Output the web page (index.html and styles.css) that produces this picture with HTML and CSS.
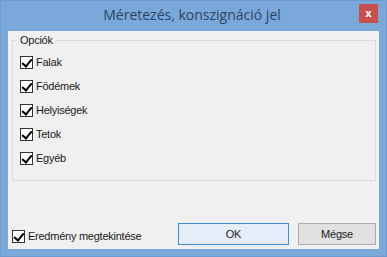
FILE: index.html
```html
<!DOCTYPE html>
<html lang="hu">
<head>
    <meta charset="UTF-8">
    <title>Méretezés, konszignáció jel</title>
    <link rel="stylesheet" href="styles.css">
</head>
<body>
    <div class="window">
        <div class="titlebar">
            <span class="title">Méretezés, konszignáció jel</span>
            <button class="close">x</button>
        </div>

        <div class="client">
            <fieldset class="group">
                <legend>Opciók</legend>
                <div class="options">
                    <label class="check"><span class="box checked"></span>Falak</label>
                    <label class="check"><span class="box checked"></span>Födémek</label>
                    <label class="check"><span class="box checked"></span>Helyiségek</label>
                    <label class="check"><span class="box checked"></span>Tetok</label>
                    <label class="check"><span class="box checked"></span>Egyéb</label>
                </div>
            </fieldset>

            <div class="footer">
                <label class="check"><span class="box checked"></span>Eredmény megtekintése</label>
                <div class="buttons">
                    <button class="btn btn-default">OK</button>
                    <button class="btn btn-cancel">Mégse</button>
                </div>
            </div>
        </div>
    </div>
</body>
</html>
```

FILE: styles.css
```css
* {
    margin: 0;
    padding: 0;
    box-sizing: border-box;
}

body {
    background: #7aa7da;
    font-family: "Liberation Sans", Arial, sans-serif;
    font-size: 11px;
    letter-spacing: -0.25px;
    color: #1a1a1a;
}

.window {
    width: 387px;
    height: 257px;
    display: flex;
    flex-direction: column;
    background: #7ba8db;
    border: 1px solid #6f9bcf;
}

.titlebar {
    height: 30px;
    display: flex;
    align-items: center;
    padding: 0 8px 0 8px;
}

.title {
    flex: 1;
    text-align: center;
    font-family: "Open Sans", sans-serif;
    font-size: 14px;
    letter-spacing: 0;
    color: #2a4460;
    padding-left: 16px;
    padding-bottom: 3px;
}

.close {
    width: 19px;
    height: 19px;
    margin-bottom: 5px;
    border: none;
    background: #c7504d;
    color: #fff;
    font-family: "DejaVu Sans", sans-serif;
    font-weight: bold;
    font-size: 10px;
    line-height: 17px;
}

.client {
    flex: 1;
    margin: 0 7px 7px 7px;
    padding: 0 3px 4px 4px;
    background: #f0f0f0;
    display: flex;
    flex-direction: column;
}

.group {
    margin-top: 3px;
    border: 1px solid #dcdcdc;
    padding: 9px 7px 15px 7px;
}

.group legend {
    margin-left: -3px;
    padding: 0 3px;
    line-height: 13px;
}

.options {
    display: flex;
    flex-direction: column;
    gap: 11px;
}

.check {
    display: flex;
    align-items: center;
    gap: 3px;
    line-height: 13px;
}

.box {
    width: 13px;
    height: 13px;
    border: 1px solid #333;
    background: #fff;
    display: flex;
    align-items: center;
    justify-content: center;
}

.box.checked::after {
    content: "";
    width: 8px;
    height: 4px;
    border-left: 2.5px solid #000;
    border-bottom: 2.5px solid #000;
    transform: translate(0, -1px) rotate(-50deg);
}

.footer {
    flex: 1;
    display: flex;
    align-items: flex-end;
    justify-content: space-between;
}

.footer .check {
    margin-bottom: 2px;
}

.buttons {
    display: flex;
    gap: 9px;
}

.btn {
    height: 22px;
    font-family: "Liberation Sans", Arial, sans-serif;
    font-size: 11px;
    letter-spacing: -0.25px;
    color: #1a1a1a;
    background: #e1e1e1;
    border: 1px solid #adadad;
}

.btn-default {
    width: 111px;
    background: #e5eef8;
    border-color: #3c8ee0;
}

.btn-cancel {
    width: 78px;
}
```
